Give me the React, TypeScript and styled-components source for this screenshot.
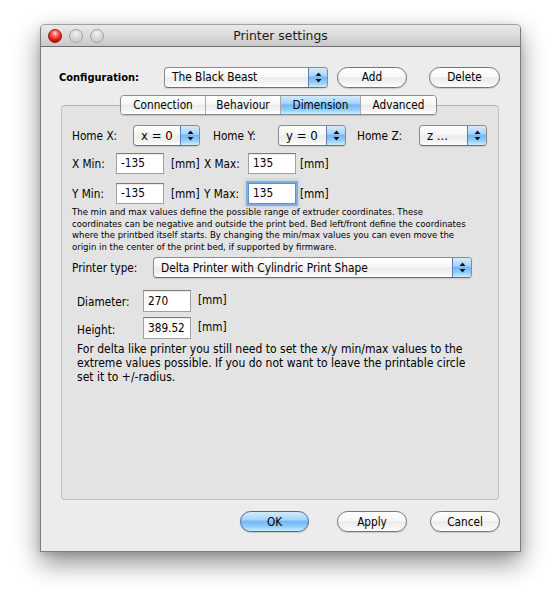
import React from "react";
import styled, { createGlobalStyle, css } from "styled-components";

const GlobalStyle = createGlobalStyle`
  html, body { margin: 0; padding: 0; background: #ffffff; }
  body {
    font-family: "DejaVu Sans Condensed", "DejaVu Sans", sans-serif;
    color: #000;
    font-size: 11.7px;
  }
  * { box-sizing: border-box; }
`;

const aquaBlue = css`
  background: linear-gradient(
    to bottom,
    #d3eafd 0%,
    #a9d5fb 40%,
    #74b9f5 50%,
    #8ecbfa 75%,
    #c9efff 100%
  );
`;

const glassWhite = css`
  background: linear-gradient(
    to bottom,
    #ffffff 0%,
    #f7f7f7 45%,
    #ebebeb 52%,
    #f4f4f4 80%,
    #ffffff 100%
  );
`;

const Page = styled.div`
  padding: 24px 0 0 40px;
  height: 607px;
`;

const Window = styled.div`
  width: 481px;
  height: 528px;
  display: flex;
  flex-direction: column;
  background: #ececec;
  border: 1px solid #7c7c7c;
  border-top-color: #a0a0a0;
  border-radius: 5px 5px 0 0;
  box-shadow: 0 11px 26px rgba(0, 0, 0, 0.45), 0 2px 6px rgba(0, 0, 0, 0.12);
  overflow: hidden;
`;

const TitleBar = styled.div`
  height: 22px;
  flex: none;
  display: flex;
  align-items: center;
  position: relative;
  background: linear-gradient(to bottom, #eaeaea 0%, #d8d8d8 55%, #c8c8c8 100%);
  border-bottom: 1px solid #6d6d6d;
  padding-left: 7px;
`;

const Lights = styled.div`
  display: flex;
  gap: 7px;
`;

const Light = styled.span<{ $red?: boolean }>`
  width: 14px;
  height: 14px;
  border-radius: 50%;
  display: block;
  ${(p) =>
    p.$red
      ? css`
          background: radial-gradient(circle at 50% 28%, #ffd6d2 0%, #ff5f55 30%, #d40c0c 70%, #a40000 100%);
          border: 1px solid #8c1a14;
        `
      : css`
          background: radial-gradient(circle at 50% 30%, #f2f2f2 0%, #d9d9d9 45%, #c2c2c2 100%);
          border: 1px solid #a3a3a3;
        `}
`;

const Title = styled.div`
  position: absolute;
  left: 0;
  right: 0;
  top: 0;
  bottom: 0;
  display: flex;
  align-items: center;
  justify-content: center;
  font-family: "DejaVu Sans", sans-serif;
  font-size: 12.4px;
  color: #1a1a1a;
  pointer-events: none;
`;

const Content = styled.div`
  flex: 1;
  display: flex;
  flex-direction: column;
  padding: 19px 21px 0 20px;
`;

const ConfigRow = styled.div`
  display: flex;
  align-items: center;
  height: 22px;
  margin-left: -2px;
`;

const BoldLabel = styled.div<{ $w: number }>`
  width: ${(p) => p.$w}px;
  flex: none;
  font-weight: bold;
  font-size: 11px;
`;

const PopupBox = styled.div<{ $w: number; $ml?: number; $big?: boolean }>`
  width: ${(p) => p.$w}px;
  margin-left: ${(p) => p.$ml ?? 0}px;
  height: 21px;
  flex: none;
  display: flex;
  border: 1px solid #8b8b8b;
  border-bottom-color: #6f6f6f;
  border-radius: 4px;
  overflow: hidden;
  box-shadow: 0 1px 1px rgba(0, 0, 0, 0.12);
  ${glassWhite};
  font-size: ${(p) => (p.$big ? 13 : 11.8)}px;
`;

const PopupText = styled.div`
  flex: 1;
  display: flex;
  align-items: center;
  padding-left: 7px;
  white-space: nowrap;
  overflow: hidden;
`;

const PopupArrows = styled.div`
  width: 19px;
  flex: none;
  display: flex;
  align-items: center;
  justify-content: center;
  border-left: 1px solid #5b7fb5;
  ${aquaBlue};
`;

const Arrows = () => (
  <svg width="7" height="11" viewBox="0 0 7 11">
    <path d="M3.5 0.5 L6.5 4 L0.5 4 Z" fill="#111" />
    <path d="M3.5 10.5 L6.5 7 L0.5 7 Z" fill="#111" />
  </svg>
);

const Popup = ({ w, ml, big, children }: { w: number; ml?: number; big?: boolean; children: React.ReactNode }) => (
  <PopupBox $w={w} $ml={ml} $big={big}>
    <PopupText>{children}</PopupText>
    <PopupArrows>
      <Arrows />
    </PopupArrows>
  </PopupBox>
);

const PushButton = styled.button<{ $w: number; $ml?: number; $default?: boolean }>`
  width: ${(p) => p.$w}px;
  margin-left: ${(p) => p.$ml ?? 0}px;
  height: 21px;
  flex: none;
  padding: 0;
  border-radius: 11px;
  border: 1px solid #747474;
  font-family: "DejaVu Sans Condensed", "DejaVu Sans", sans-serif;
  font-size: 11.7px;
  color: #000;
  box-shadow: 0 1px 1px rgba(0, 0, 0, 0.15);
  ${(p) =>
    p.$default
      ? css`
          ${aquaBlue};
          border-color: #4b67a0;
        `
      : glassWhite};
`;

const TabView = styled.div`
  margin-top: 7px;
  display: flex;
  flex-direction: column;
`;

const TabStrip = styled.div`
  align-self: center;
  display: flex;
  height: 20px;
  margin-left: -3px;
  position: relative;
  z-index: 1;
  border: 1px solid #8a8a8a;
  border-radius: 4px;
  overflow: hidden;
  box-shadow: 0 1px 1px rgba(0, 0, 0, 0.15);
`;

const Tab = styled.div<{ $w: number; $active?: boolean }>`
  width: ${(p) => p.$w}px;
  display: flex;
  align-items: center;
  justify-content: center;
  & + & {
    border-left: 1px solid #a9a9a9;
  }
  ${(p) => (p.$active ? aquaBlue : glassWhite)};
  ${(p) =>
    p.$active &&
    css`
      && {
        border-left-color: #5b7fb5;
      }
      & + & {
        border-left-color: #5b7fb5;
      }
    `}
`;

const Panel = styled.div`
  margin-top: -10px;
  height: 395px;
  background: #e3e3e3;
  border: 1px solid #c0c0c0;
  border-top-color: #b2b2b2;
  border-radius: 4px;
  padding: 19px 10px 0 10px;
  display: flex;
  flex-direction: column;
`;

const Row = styled.div<{ $mt?: number; $h?: number; $indent?: number }>`
  display: flex;
  align-items: center;
  height: ${(p) => p.$h ?? 21}px;
  margin-top: ${(p) => p.$mt ?? 0}px;
  padding-left: ${(p) => p.$indent ?? 0}px;
`;

const Label = styled.div<{ $w?: number; $ml?: number; $dy?: number }>`
  width: ${(p) => (p.$w ? `${p.$w}px` : "auto")};
  margin-left: ${(p) => p.$ml ?? 0}px;
  flex: none;
  white-space: nowrap;
  position: relative;
  top: ${(p) => p.$dy ?? 0}px;
`;

const Input = styled.div<{ $w: number; $h?: number; $focus?: boolean }>`
  width: ${(p) => p.$w}px;
  height: ${(p) => p.$h ?? 21}px;
  flex: none;
  background: #fff;
  border: 1px solid #a0a0a0;
  border-top-color: #7d7d7d;
  display: flex;
  align-items: center;
  padding: 0 0 1px 4px;
  box-shadow: inset 0 1px 0 rgba(0, 0, 0, 0.08);
  ${(p) =>
    p.$focus &&
    css`
      border-color: #5d8fd0;
      box-shadow: 0 0 0 2px rgba(118, 167, 226, 0.85), 0 0 3px 3px rgba(118, 167, 226, 0.35);
    `}
`;

const Description = styled.p`
  margin: 2px 0 0 0;
  font-size: 9.5px;
  line-height: 11.5px;
  white-space: nowrap;
`;

const Note = styled.p`
  margin: 3px 0 0 5px;
  font-size: 12px;
  line-height: 14px;
  white-space: nowrap;
`;

const ButtonRow = styled.div`
  margin-top: 11px;
  margin-right: -1px;
  display: flex;
  justify-content: flex-end;
`;

export default function App() {
  return (
    <>
      <GlobalStyle />
      <Page>
        <Window>
          <TitleBar>
            <Lights>
              <Light $red />
              <Light />
              <Light />
            </Lights>
            <Title>Printer settings</Title>
          </TitleBar>
          <Content>
            <ConfigRow>
              <BoldLabel $w={105}>Configuration:</BoldLabel>
              <Popup w={164}>The Black Beast</Popup>
              <PushButton $w={70} $ml={9}>Add</PushButton>
              <PushButton $w={71} $ml={22}>Delete</PushButton>
            </ConfigRow>
            <TabView>
              <TabStrip>
                <Tab $w={84}>Connection</Tab>
                <Tab $w={75}>Behaviour</Tab>
                <Tab $w={80} $active>Dimension</Tab>
                <Tab $w={76}>Advanced</Tab>
              </TabStrip>
              <Panel>
                <Row>
                  <Label $w={61}>Home X:</Label>
                  <Popup w={67} big>x = 0</Popup>
                  <Label $w={65} $ml={13}>Home Y:</Label>
                  <Popup w={68} big>y = 0</Popup>
                  <Label $w={62} $ml={11}>Home Z:</Label>
                  <Popup w={68} big>z ...</Popup>
                </Row>
                <Row $mt={7}>
                  <Label $w={44}>X Min:</Label>
                  <Input $w={48}>-135</Input>
                  <Label $w={33} $ml={7}>[mm]</Label>
                  <Label $w={44}>X Max:</Label>
                  <Input $w={48}>135</Input>
                  <Label $ml={4}>[mm]</Label>
                </Row>
                <Row $mt={9}>
                  <Label $w={44}>Y Min:</Label>
                  <Input $w={48}>-135</Input>
                  <Label $w={33} $ml={7}>[mm]</Label>
                  <Label $w={44}>Y Max:</Label>
                  <Input $w={48} $focus>135</Input>
                  <Label $ml={4}>[mm]</Label>
                </Row>
                <Description>
                  The min and max values define the possible range of extruder coordinates. These
                  <br />
                  coordinates can be negative and outside the print bed. Bed left/front define the coordinates
                  <br />
                  where the printbed itself starts. By changing the min/max values you can even move the
                  <br />
                  origin in the center of the print bed, if supported by firmware.
                </Description>
                <Row $mt={5}>
                  <Label $w={81}>Printer type:</Label>
                  <Popup w={319}>Delta Printer with Cylindric Print Shape</Popup>
                </Row>
                <Row $mt={12} $h={22} $indent={5}>
                  <Label $w={66} $dy={1}>Diameter:</Label>
                  <Input $w={48} $h={22}>270</Input>
                  <Label $ml={7} $dy={-1}>[mm]</Label>
                </Row>
                <Row $mt={5} $h={22} $indent={5}>
                  <Label $w={66} $dy={2}>Height:</Label>
                  <Input $w={48} $h={22}>389.52</Input>
                  <Label $ml={7} $dy={-1}>[mm]</Label>
                </Row>
                <Note>
                  For delta like printer you still need to set the x/y min/max values to the
                  <br />
                  extreme values possible. If you do not want to leave the printable circle
                  <br />
                  set it to +/-radius.
                </Note>
              </Panel>
            </TabView>
            <ButtonRow>
              <PushButton $w={69} $default>OK</PushButton>
              <PushButton $w={70} $ml={28}>Apply</PushButton>
              <PushButton $w={70} $ml={23}>Cancel</PushButton>
            </ButtonRow>
          </Content>
        </Window>
      </Page>
    </>
  );
}
